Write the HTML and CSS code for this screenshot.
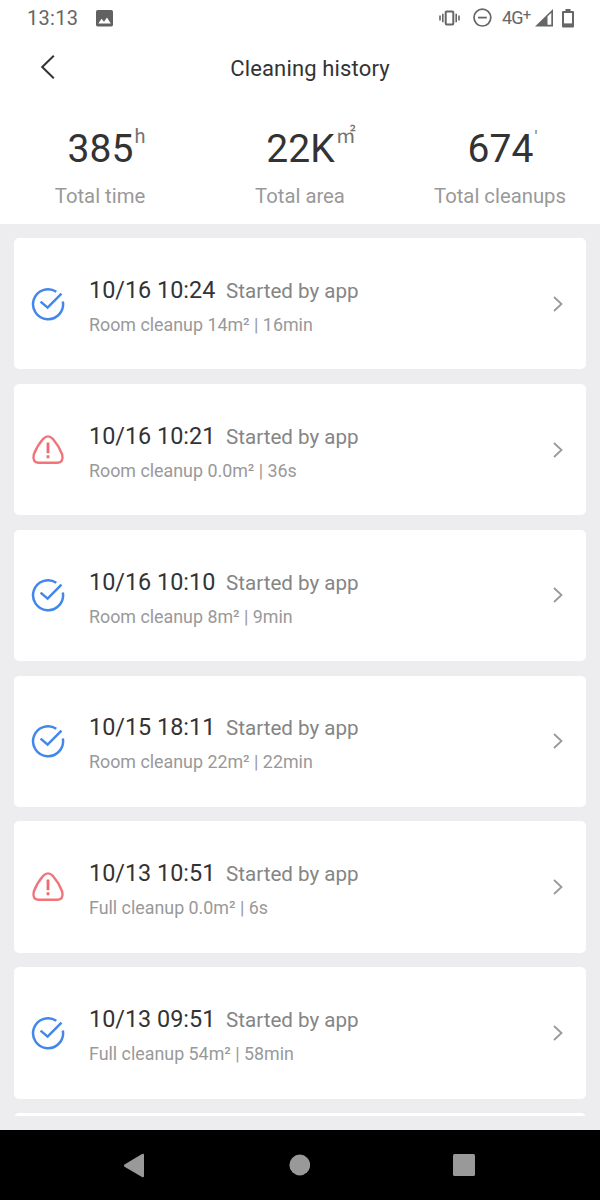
FILE: index.html
```html
<!DOCTYPE html>
<html lang="en">
<head>
<meta charset="utf-8">
<title>Cleaning history</title>
<link rel="stylesheet" href="styles.css">
</head>
<body>
<svg class="defs" width="0" height="0">
  <symbol id="done" viewBox="0 0 34 34">
    <path d="M25.3 4.7A15 15 0 1 0 31.8 14.4M9.6 14.6L16.6 20.6L30.5 6.6" fill="none" stroke="#4287ea" stroke-width="2.5"/>
  </symbol>
  <symbol id="warn" viewBox="0 0 34 34">
    <path d="M12.2 5.8Q17 1 21.8 5.8Q28 13 31.2 21.5Q33 29.6 26 29.8H8Q1 29.6 2.8 21.5Q6 13 12.2 5.8Z" fill="none" stroke="#f07479" stroke-width="2.4"/>
    <path d="M17 9.5V20.2M17 22.2V25.2" fill="none" stroke="#ee6a70" stroke-width="2.8"/>
  </symbol>
  <symbol id="next" viewBox="0 0 12 18">
    <path d="M2 2L9.5 9L2 16" fill="none" stroke="#999" stroke-width="1.8"/>
  </symbol>
</svg>
<div class="screen">
  <header class="top">
    <div class="status">
      <span class="clock">13:13</span>
      <svg class="photo" width="17" height="17" viewBox="0 0 17 17"><rect width="17" height="16.5" rx="1.7" fill="#616161"/><path d="M2.3 13.5L5.6 8.8L8 11.7L11 7.6L14.8 13.5Z" fill="#fff"/></svg>
      <svg class="vibrate" width="21" height="16" viewBox="0 0 21 16"><path d="M1 5.5V10.5M3.8 3.8V12.2M17.2 3.8V12.2M20 5.5V10.5" stroke="#666" stroke-width="1.6"/><rect x="6.7" y="1.4" width="7.6" height="13" rx="1" fill="none" stroke="#666" stroke-width="2"/></svg>
      <svg class="dnd" width="20" height="20" viewBox="0 0 20 20"><circle cx="10.4" cy="9.6" r="8.4" fill="none" stroke="#666" stroke-width="1.7"/><path d="M6 9.6H14.8" stroke="#666" stroke-width="1.8"/></svg>
      <span class="network">4G<span class="plus">+</span></span>
      <svg class="signal" width="18" height="18" viewBox="0 0 18 18"><path d="M0 17.5L18 0V17.5Z" fill="#666"/><path d="M12.5 7.6L16.3 3.8V15.8H12.5Z" fill="#fff"/></svg>
      <svg class="battery" width="12" height="19" viewBox="0 0 12 19"><path d="M3.5 0H8.5V2H11Q12 2 12 3V17.5Q12 18.5 11 18.5H1Q0 18.5 0 17.5V3Q0 2 1 2H3.5Z" fill="#666"/><rect x="2" y="4" width="8" height="10.4" fill="#fff"/></svg>
    </div>
    <div class="titlebar">
      <svg class="back" width="16" height="26" viewBox="0 0 16 26"><path d="M13.8 1.7L2.2 13L13.8 24.3" fill="none" stroke="#333" stroke-width="2"/></svg>
      <h1>Cleaning history</h1>
    </div>
    <div class="stats">
      <div class="stat"><div class="value">385<span class="unit">h</span></div><div class="label">Total time</div></div>
      <div class="stat"><div class="value">22K<span class="unit area">㎡</span></div><div class="label">Total area</div></div>
      <div class="stat"><div class="value">674<span class="unit tick">'</span></div><div class="label">Total cleanups</div></div>
    </div>
  </header>
  <main class="list">
    <article class="card"><svg class="state"><use href="#done"/></svg><div class="info"><div class="line"><span class="date">10/16 10:24</span><span class="by">Started by app</span></div><div class="detail">Room cleanup 14m² | 16min</div></div><svg class="next"><use href="#next"/></svg></article>
    <article class="card"><svg class="state"><use href="#warn"/></svg><div class="info"><div class="line"><span class="date">10/16 10:21</span><span class="by">Started by app</span></div><div class="detail">Room cleanup 0.0m² | 36s</div></div><svg class="next"><use href="#next"/></svg></article>
    <article class="card"><svg class="state"><use href="#done"/></svg><div class="info"><div class="line"><span class="date">10/16 10:10</span><span class="by">Started by app</span></div><div class="detail">Room cleanup 8m² | 9min</div></div><svg class="next"><use href="#next"/></svg></article>
    <article class="card"><svg class="state"><use href="#done"/></svg><div class="info"><div class="line"><span class="date">10/15 18:11</span><span class="by">Started by app</span></div><div class="detail">Room cleanup 22m² | 22min</div></div><svg class="next"><use href="#next"/></svg></article>
    <article class="card"><svg class="state"><use href="#warn"/></svg><div class="info"><div class="line"><span class="date">10/13 10:51</span><span class="by">Started by app</span></div><div class="detail">Full cleanup 0.0m² | 6s</div></div><svg class="next"><use href="#next"/></svg></article>
    <article class="card"><svg class="state"><use href="#done"/></svg><div class="info"><div class="line"><span class="date">10/13 09:51</span><span class="by">Started by app</span></div><div class="detail">Full cleanup 54m² | 58min</div></div><svg class="next"><use href="#next"/></svg></article>
    <article class="card"></article>
  </main>
  <nav class="nav">
    <svg width="22" height="25" viewBox="0 0 22 25"><path d="M1.5 11.5L19 1Q21 0 21 2V23Q21 25 19 24L1.5 13.8Q0 12.7 1.5 11.5Z" fill="#999"/></svg>
    <svg width="22" height="22" viewBox="0 0 22 22"><circle cx="11.8" cy="11" r="10.4" fill="#999"/></svg>
    <svg width="22" height="22" viewBox="0 0 22 22"><rect width="22" height="22" rx="1.5" fill="#999"/></svg>
  </nav>
</div>
</body>
</html>
```

FILE: styles.css
```css
* { box-sizing: border-box; }
body { margin: 0; font-family: Roboto, "Liberation Sans", sans-serif; }
svg { display: block; flex: none; }
.defs { position: absolute; }
.screen { width: 600px; height: 1200px; display: flex; flex-direction: column; background: #ededf0; overflow: hidden; }
.top { height: 223.5px; flex: none; background: #fff; }
.status { height: 36px; display: flex; align-items: center; padding: 0 25px 0 27px; color: #666; }
.clock { width: 51px; font-size: 20px; line-height: 36px; letter-spacing: 0.3px; white-space: nowrap; }
.photo { margin-left: 18px; }
.vibrate { margin-left: auto; }
.dnd { margin-left: 12px; }
.network { width: 29px; margin-left: 10px; font-size: 18px; line-height: 34px; letter-spacing: -0.8px; white-space: nowrap; }
.plus { font-size: 15px; vertical-align: 4px; line-height: 1; }
.signal { margin-left: 4px; }
.battery { margin-left: 9px; margin-right: 1px; }
.titlebar { height: 64px; display: grid; grid-template-columns: 100px 1fr 80px; align-items: center; }
.back { margin-left: 40px; margin-top: -2px; }
h1 { margin: 0; font-size: 22px; font-weight: 400; line-height: 64px; height: 64px; padding-top: 1px; text-align: center; color: #333; letter-spacing: 0.15px; }
.stats { display: grid; grid-template-columns: repeat(3, 200px); padding-top: 25px; text-align: center; }
.value { width: max-content; position: relative; margin: 0 auto; padding-left: 1px; font-size: 39px; line-height: 48px; color: #333; }
.unit { position: absolute; left: 100%; top: 0; margin-left: 1px; font-size: 20px; line-height: 22px; color: #737373; font-weight: 400; white-space: nowrap; }
.area { top: -1px; font-family: "Noto Sans CJK SC", sans-serif; }
.tick { font-size: 17px; }
.label { margin-top: 11px; font-size: 20.3px; line-height: 24px; color: #999; }
.list { height: 892px; flex: none; overflow: hidden; padding: 14.5px 14.5px 0 14px; display: flex; flex-direction: column; gap: 14.5px; }
.card { height: 131.35px; flex: none; display: flex; align-items: center; padding: 0 22px 0 16.5px; background: #fff; border-radius: 5px; }
.state { width: 34px; height: 34px; }
.info { margin-left: 24.5px; flex: 1; padding-top: 4.4px; }
.line { display: flex; align-items: baseline; gap: 10px; line-height: 34px; white-space: nowrap; }
.date { width: 127px; font-size: 23.4px; color: #333; }
.by { font-size: 20.6px; color: #858585; }
.detail { margin-top: 3px; font-size: 17.85px; line-height: 28px; color: #999; white-space: nowrap; }
.next { width: 12px; height: 18px; }
.nav { margin-top: auto; height: 70px; background: #000; display: flex; align-items: center; padding: 0 125px 0 123px; justify-content: space-between; }
```
